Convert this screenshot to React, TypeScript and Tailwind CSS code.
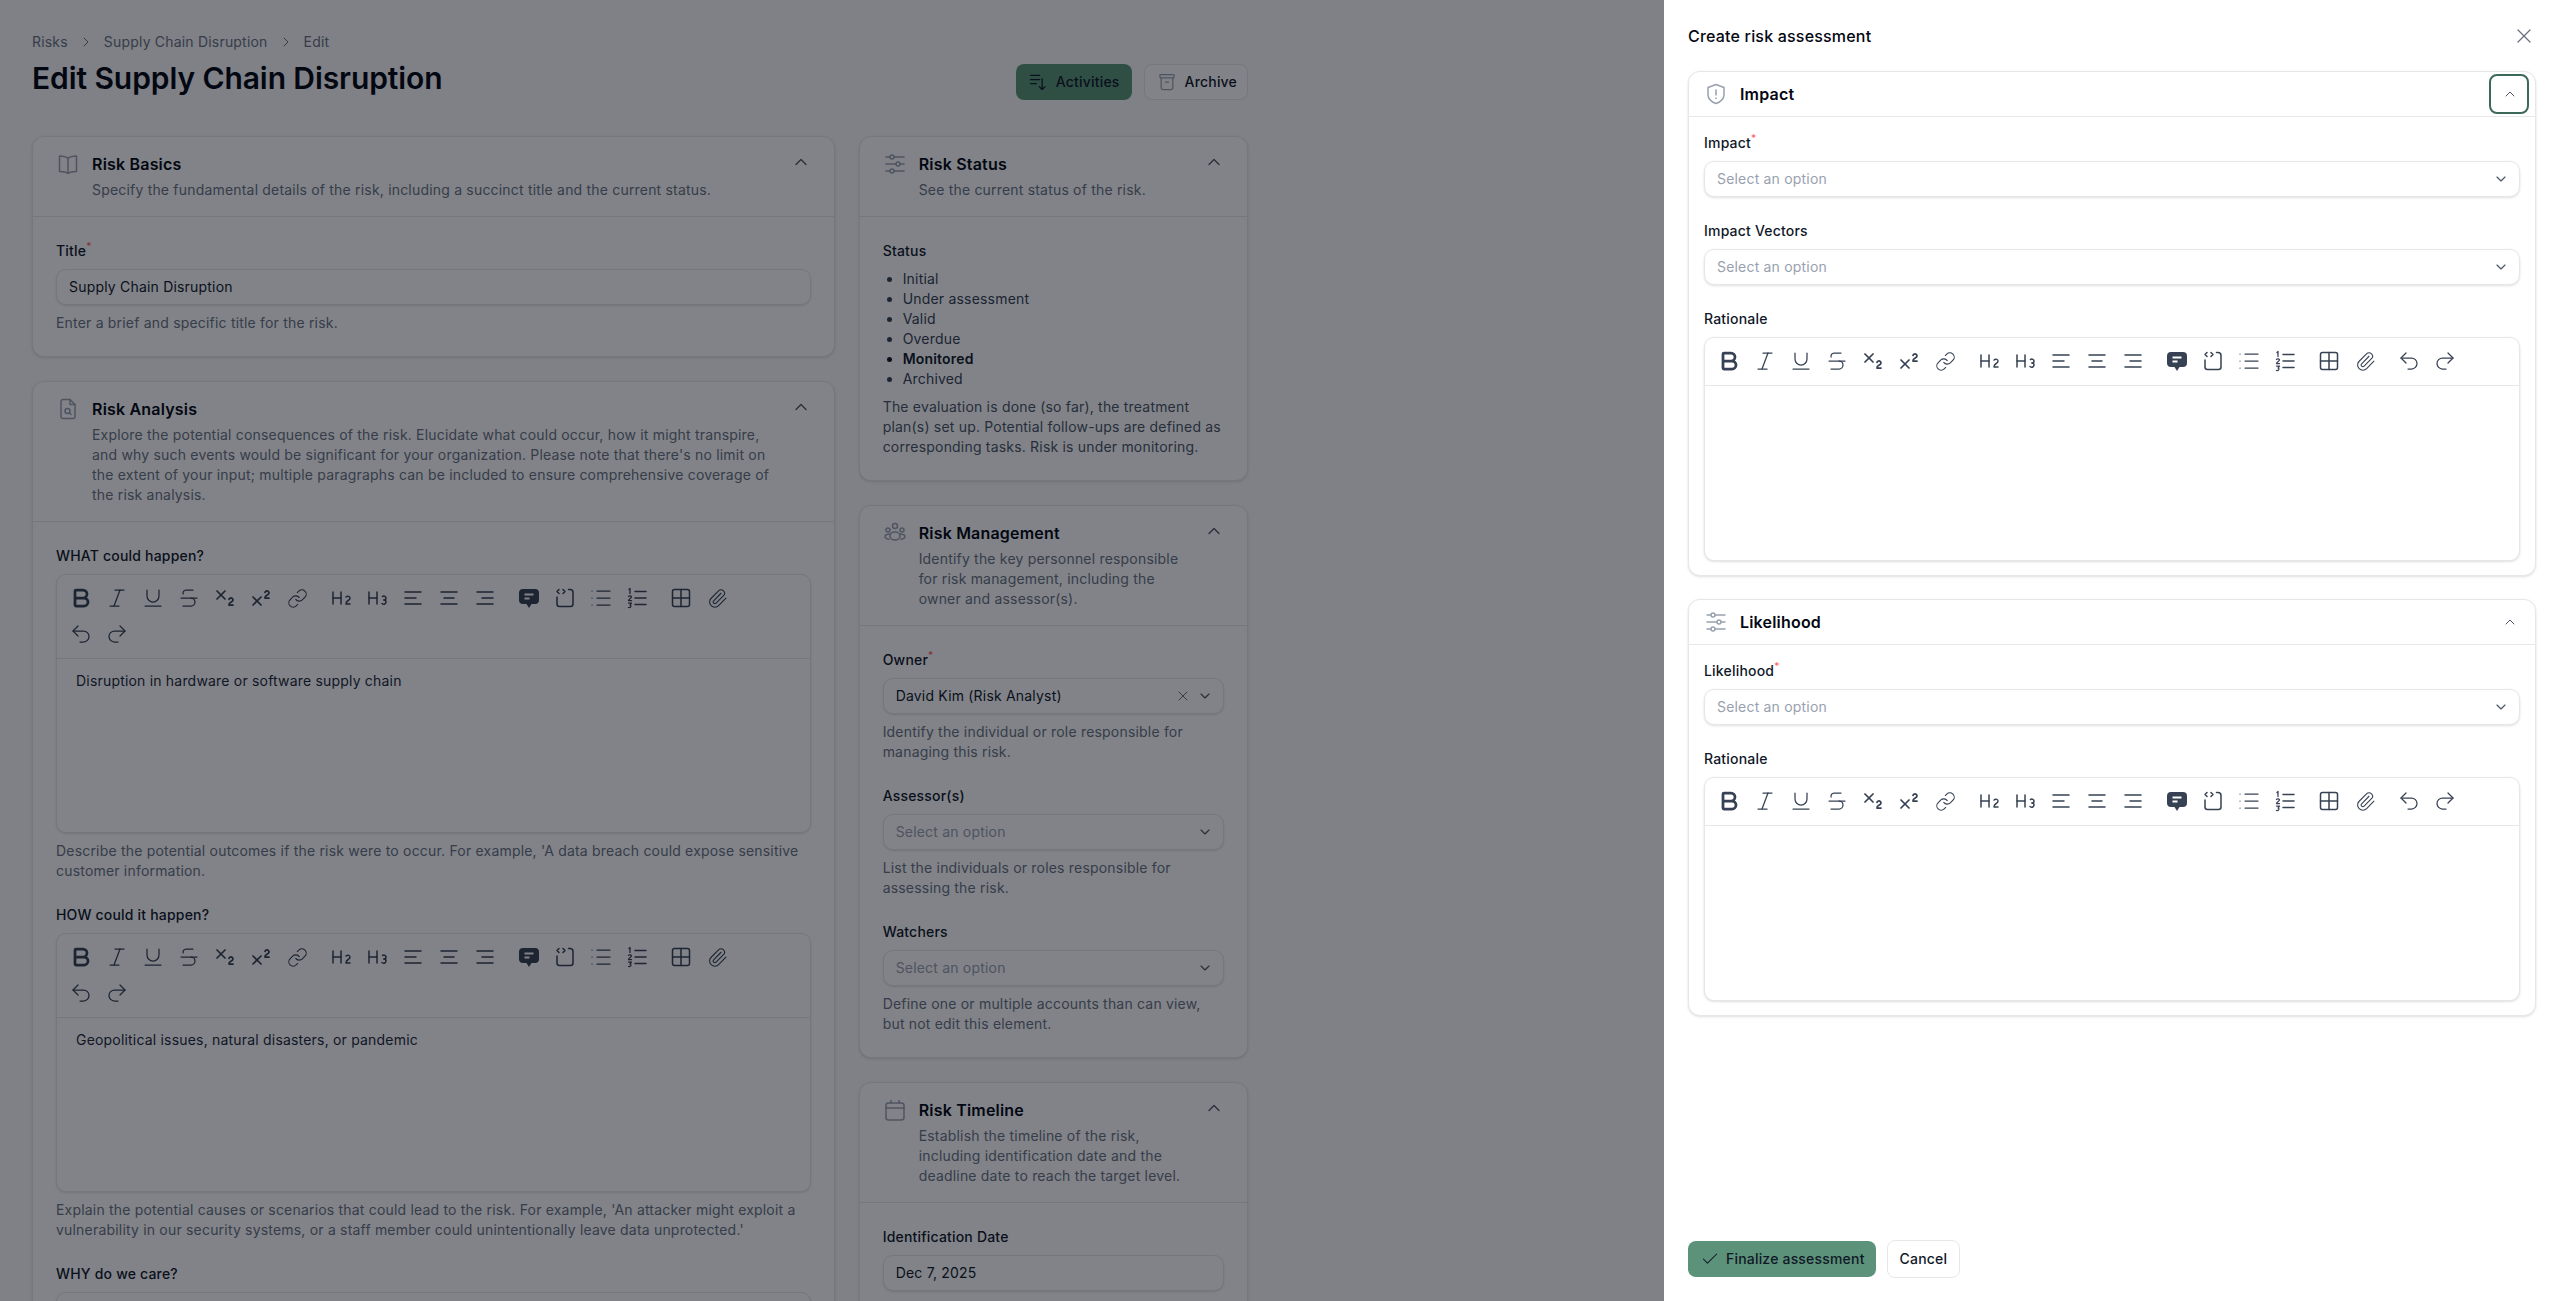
import type { ReactNode } from "react";
import {
  Bold,
  Check,
  ChevronDown,
  ChevronRight,
  ChevronUp,
  Heading2,
  Heading3,
  Italic,
  Link,
  List,
  Paperclip,
  Redo2,
  Strikethrough,
  Subscript,
  Superscript,
  Underline,
  Undo2,
  X,
} from "lucide-react";

function Glyph({ children, className = "w-6 h-6 text-gray-400" }: { children: ReactNode; className?: string }) {
  return (
    <svg viewBox="0 0 24 24" fill="none" stroke="currentColor" strokeWidth="1.5" strokeLinecap="round" strokeLinejoin="round" className={`shrink-0 ${className}`}>
      {children}
    </svg>
  );
}

const BookIcon = () => (
  <Glyph>
    <path d="M12 6.5C10.5 5 8 4 3.5 4v15.5c4.500 0 7 .8 8.500 2 1.500-1.200 4-2 8.500-2V4C16 4 13.500 5 12 6.500z" />
    <path d="M12 6.500V21" />
  </Glyph>
);

const FileIcon = () => (
  <Glyph>
    <path d="M14 2.500H7a2 2 0 0 0-2 2v15a2 2 0 0 0 2 2h10a2 2 0 0 0 2-2V7.500z" />
    <path d="M14 2.500v5h5" />
    <circle cx="11.500" cy="14" r="2.500" />
    <path d="M13.500 16l1.500 1.500" />
  </Glyph>
);

const SlidersIcon = () => (
  <Glyph>
    <path d="M3 5h4M11 5h10M3 12h10M17 12h4M3 19h4M11 19h10" />
    <circle cx="9" cy="5" r="2" />
    <circle cx="15" cy="12" r="2" />
    <circle cx="9" cy="19" r="2" />
  </Glyph>
);

const UsersIcon = () => (
  <Glyph>
    <circle cx="12" cy="5" r="2.500" />
    <circle cx="5" cy="9" r="2" />
    <circle cx="19" cy="9" r="2" />
    <ellipse cx="12" cy="15" rx="5" ry="4" />
    <path d="M6.500 13C4 13.300 2 14.200 2 15.500S3.800 18 6 18.300M17.500 13c2.500.3 4.500 1.200 4.500 2.500S20.200 18 18 18.300" />
  </Glyph>
);

const CalendarIcon = () => (
  <Glyph>
    <rect x="3" y="5" width="18" height="17" rx="2.500" />
    <path d="M3 10h18M8 2.500V5M16 2.500V5" />
  </Glyph>
);

const ShieldIcon = () => (
  <Glyph>
    <path d="M12 2.500l8 3v7c0 4.500-3.500 7.500-8 9-4.500-1.500-8-4.500-8-9v-7z" />
    <path d="M12 8v5M12 16v.5" />
  </Glyph>
);

const ActivitiesIcon = () => (
  <Glyph className="w-5 h-5 text-gray-900">
    <path d="M3 4h11M3 9h11M3 14h7M17 8v13M13.500 17.500L17 21l3.500-3.500" />
  </Glyph>
);

const ArchiveIcon = () => (
  <Glyph className="w-5 h-5 text-gray-400">
    <rect x="3.500" y="3" width="17" height="4" rx="1" />
    <path d="M5 7v12a2 2 0 0 0 2 2h10a2 2 0 0 0 2-2V7M10 12h4" />
  </Glyph>
);

const AlignLeft = () => (
  <Glyph className="w-6 h-6">
    <path d="M4 6h16M4 12h11M4 18h16" />
  </Glyph>
);

const AlignCenter = () => (
  <Glyph className="w-6 h-6">
    <path d="M4 6h16M7 12h10M4 18h16" />
  </Glyph>
);

const AlignRight = () => (
  <Glyph className="w-6 h-6">
    <path d="M4 6h16M9 12h11M4 18h16" />
  </Glyph>
);

const CommentIcon = () => (
  <svg viewBox="0 0 24 24" className="h-6 w-6 shrink-0">
    <path fill="currentColor" d="M6 3h12a4 4 0 0 1 4 4v7a4 4 0 0 1-4 4h-3.500L12 22l-2.500-4H6a4 4 0 0 1-4-4V7a4 4 0 0 1 4-4z" />
    <path fill="none" stroke="#fff" strokeWidth="2" d="M7.500 8.500h9M7.500 12.500h5" />
  </svg>
);

const CodeIcon = () => (
  <Glyph className="w-6 h-6">
    <path d="M15.500 3.500H17a3 3 0 0 1 3 3V18a2.500 2.500 0 0 1-2.500 2.500h-11A2.500 2.500 0 0 1 4 18v-7" />
    <path d="M6 3.500L4 5.500l2 2M10 3.500l2 2-2 2" />
  </Glyph>
);

const OrderedIcon = () => (
  <Glyph className="w-6 h-6">
    <path d="M10 5.500h11M10 12h11M10 18.500h11" />
    <path strokeWidth="1.25" d="M4 3.500l1-1v5M3.500 10.500c.5-1 3-1 3 .5 0 1-3 2-3 3.500h3M3.500 17h3L5 19c1.500 0 1.500 3-1.500 2.500" />
  </Glyph>
);

const TableIcon = () => (
  <Glyph className="w-6 h-6">
    <rect x="3.500" y="3.500" width="17" height="17" rx="2" />
    <path d="M12 3.500v17M3.500 12h17" />
  </Glyph>
);

const toolbarGroups: ReactNode[][] = [
  [
    <Bold className="h-6 w-6" strokeWidth={2.75} />,
    <Italic className="h-6 w-6" strokeWidth={1.25} />,
    <Underline className="h-6 w-6" strokeWidth={1.25} />,
    <Strikethrough className="h-6 w-6" strokeWidth={1.25} />,
    <Subscript className="h-6 w-6" strokeWidth={1.75} />,
    <Superscript className="h-6 w-6" strokeWidth={1.75} />,
    <Link className="h-[21px] w-[21px]" strokeWidth={1.25} />,
  ],
  [<Heading2 className="h-6 w-6" strokeWidth={1.5} />, <Heading3 className="h-6 w-6" strokeWidth={1.5} />, <AlignLeft />, <AlignCenter />, <AlignRight />],
  [<CommentIcon />, <CodeIcon />, <List className="h-6 w-6" strokeWidth={1.25} />, <OrderedIcon />],
  [<TableIcon />, <Paperclip className="h-[21px] w-[21px]" strokeWidth={1.25} />],
  [<Undo2 className="h-6 w-6" strokeWidth={1.25} />, <Redo2 className="h-6 w-6" strokeWidth={1.25} />],
];

function Editor({ value, wrapped }: { value?: string; wrapped?: boolean }) {
  return (
    <div className="rounded-[10px] border border-gray-200 bg-white shadow-sm">
      <div className="flex flex-wrap gap-x-4 gap-y-3 border-b border-gray-200 pb-3 pl-2.5 pr-2.5 pt-[11px]">
        {toolbarGroups.map((group, i) => (
          <div key={i} className="flex gap-2">
            {group.map((icon, j) => (
              <span key={j} className="flex h-6 w-7 items-center justify-center text-gray-700">
                {icon}
              </span>
            ))}
          </div>
        ))}
      </div>
      <div className={`px-[19px] py-3 text-sm text-gray-800 ${wrapped ? "h-[173px]" : "h-[174px]"}`}>{value}</div>
    </div>
  );
}

function Label({ children, required }: { children: ReactNode; required?: boolean }) {
  return (
    <div className="text-sm font-medium leading-5 text-gray-900">
      {children}
      {required && <span className="align-super text-[10px] leading-[0] text-red-400">*</span>}
    </div>
  );
}

function Help({ children }: { children: ReactNode }) {
  return <p className="mt-2 text-sm text-gray-500">{children}</p>;
}

function SelectBox({ value, clearable }: { value?: string; clearable?: boolean }) {
  return (
    <div className="mt-2 flex h-9 items-center rounded-[10px] border border-gray-200 bg-white pl-3 pr-2.5 text-sm shadow-sm">
      <span className={`flex-1 ${value ? "text-gray-900" : "text-gray-400"}`}>{value ?? "Select an option"}</span>
      {clearable && <X className="mr-1.5 h-4 w-4 text-gray-500" strokeWidth={1.5} />}
      <ChevronDown className="h-4 w-4 text-gray-600" strokeWidth={1.75} />
    </div>
  );
}

function TextBox({ value }: { value: string }) {
  return <div className="mt-2 flex h-9 items-center rounded-[10px] border border-gray-200 bg-white px-3 text-sm text-gray-900 shadow-sm">{value}</div>;
}

function Section({ icon, title, description, children }: { icon: ReactNode; title: string; description: string; children: ReactNode }) {
  return (
    <section className="rounded-xl border border-gray-200 bg-white shadow-sm">
      <header className="flex gap-3 border-b border-gray-200 px-[23px] pb-4 pt-[15px]">
        {icon}
        <div className="min-w-0 flex-1">
          <h2 className="text-base font-semibold leading-6 text-gray-950">{title}</h2>
          <p className="mt-1 text-sm text-gray-500">{description}</p>
        </div>
        <ChevronUp className="h-5 w-5 shrink-0 text-gray-600" strokeWidth={1.5} />
      </header>
      <div className="px-[23px] pb-[23px] pt-6">{children}</div>
    </section>
  );
}

function PanelCard({ icon, title, focused, children }: { icon: ReactNode; title: string; focused?: boolean; children: ReactNode }) {
  return (
    <section className="rounded-xl border border-gray-200 bg-white shadow-sm">
      <header className="relative flex h-[45px] items-center gap-3 border-b border-gray-200 pl-[15px] pr-[17px]">
        {icon}
        <h3 className="flex-1 text-base font-semibold text-gray-950">{title}</h3>
        <ChevronUp className="h-4 w-4 text-gray-600" strokeWidth={1.5} />
        {focused && <span className="absolute right-[6px] top-[2px] h-10 w-10 rounded-lg border-2 border-[#3d6a58]" />}
      </header>
      <div className="space-y-6 px-[15px] pb-[14px] pt-4">{children}</div>
    </section>
  );
}

export default function App() {
  return (
    <div className="relative h-screen overflow-hidden bg-[#fafafa] font-['Inter',sans-serif] tracking-[0.012em]">
      <main className="w-[1280px] px-8 pt-8">
        <div className="mb-9 flex items-end justify-between">
          <div className="pb-1">
            <nav className="flex items-center gap-2.5 text-sm text-gray-500">
              <span>Risks</span>
              <ChevronRight className="h-4 w-4" strokeWidth={1.5} />
              <span>Supply Chain Disruption</span>
              <ChevronRight className="h-4 w-4" strokeWidth={1.5} />
              <span>Edit</span>
            </nav>
            <h1 className="mt-2 text-3xl font-semibold tracking-[-0.003em] text-gray-950">Edit Supply Chain Disruption</h1>
          </div>
          <div className="flex items-center gap-3">
            <button className="flex h-9 items-center gap-2 rounded-lg bg-[#5b9778] px-3 text-sm font-medium text-gray-900">
              <ActivitiesIcon />
              Activities
            </button>
            <button className="flex h-9 items-center gap-2 rounded-lg border border-gray-200 bg-white pl-3 pr-2.5 text-sm font-medium text-gray-900">
              <ArchiveIcon />
              Archive
            </button>
          </div>
        </div>

        <div className="grid grid-cols-3 items-start gap-6">
          <div className="col-span-2 space-y-6">
            <Section icon={<BookIcon />} title="Risk Basics" description="Specify the fundamental details of the risk, including a succinct title and the current status.">
              <Label required>Title</Label>
              <TextBox value="Supply Chain Disruption" />
              <Help>Enter a brief and specific title for the risk.</Help>
            </Section>
            <Section
              icon={<FileIcon />}
              title="Risk Analysis"
              description="Explore the potential consequences of the risk. Elucidate what could occur, how it might transpire, and why such events would be significant for your organization. Please note that there's no limit on the extent of your input; multiple paragraphs can be included to ensure comprehensive coverage of the risk analysis."
            >
              <div className="space-y-6">
                <div>
                  <Label>WHAT could happen?</Label>
                  <div className="mt-2">
                    <Editor wrapped value="Disruption in hardware or software supply chain" />
                  </div>
                  <Help>Describe the potential outcomes if the risk were to occur. For example, 'A data breach could expose sensitive customer information.</Help>
                </div>
                <div>
                  <Label>HOW could it happen?</Label>
                  <div className="mt-2">
                    <Editor wrapped value="Geopolitical issues, natural disasters, or pandemic" />
                  </div>
                  <Help>Explain the potential causes or scenarios that could lead to the risk. For example, 'An attacker might exploit a vulnerability in our security systems, or a staff member could unintentionally leave data unprotected.'</Help>
                </div>
                <div>
                  <Label>WHY do we care?</Label>
                  <div className="mt-2">
                    <Editor wrapped />
                  </div>
                </div>
              </div>
            </Section>
          </div>

          <div className="space-y-6">
            <Section icon={<SlidersIcon />} title="Risk Status" description="See the current status of the risk.">
              <Label>Status</Label>
              <ul className="mt-2 list-disc pl-5 text-sm text-gray-700">
                <li>Initial</li>
                <li>Under assessment</li>
                <li>Valid</li>
                <li>Overdue</li>
                <li className="font-semibold text-gray-900">Monitored</li>
                <li>Archived</li>
              </ul>
              <p className="mt-2 text-sm text-gray-600">The evaluation is done (so far), the treatment plan(s) set up. Potential follow-ups are defined as corresponding tasks. Risk is under monitoring.</p>
            </Section>
            <Section icon={<UsersIcon />} title="Risk Management" description="Identify the key personnel responsible for risk management, including the owner and assessor(s).">
              <div className="space-y-6">
                <div>
                  <Label required>Owner</Label>
                  <SelectBox value="David Kim (Risk Analyst)" clearable />
                  <Help>Identify the individual or role responsible for managing this risk.</Help>
                </div>
                <div>
                  <Label>Assessor(s)</Label>
                  <SelectBox />
                  <Help>List the individuals or roles responsible for assessing the risk.</Help>
                </div>
                <div>
                  <Label>Watchers</Label>
                  <SelectBox />
                  <Help>Define one or multiple accounts than can view, but not edit this element.</Help>
                </div>
              </div>
            </Section>
            <Section icon={<CalendarIcon />} title="Risk Timeline" description="Establish the timeline of the risk, including identification date and the deadline date to reach the target level.">
              <Label>Identification Date</Label>
              <TextBox value="Dec 7, 2025" />
            </Section>
          </div>
        </div>
      </main>

      {/* dimmed backdrop + slide-over */}
      <div className="fixed inset-0 bg-gray-950/50" />
      <aside className="fixed inset-y-0 right-0 flex w-[896px] flex-col bg-white px-6">
        <div className="flex h-[71px] items-center justify-between">
          <h2 className="text-base font-medium text-gray-950">Create risk assessment</h2>
          <X className="h-6 w-6 text-gray-500" strokeWidth={1.25} />
        </div>
        <div className="flex-1 space-y-[23px]">
          <PanelCard icon={<ShieldIcon />} title="Impact" focused>
            <div>
              <Label required>Impact</Label>
              <SelectBox />
            </div>
            <div>
              <Label>Impact Vectors</Label>
              <SelectBox />
            </div>
            <div>
              <Label>Rationale</Label>
              <div className="mt-2">
                <Editor />
              </div>
            </div>
          </PanelCard>
          <PanelCard icon={<SlidersIcon />} title="Likelihood">
            <div>
              <Label required>Likelihood</Label>
              <SelectBox />
            </div>
            <div>
              <Label>Rationale</Label>
              <div className="mt-2">
                <Editor />
              </div>
            </div>
          </PanelCard>
        </div>
        <div className="flex items-center gap-[11px] pb-[23px]">
          <button className="flex h-9 items-center gap-1.5 rounded-lg bg-[#5c9279] pl-3 pr-[11px] text-sm font-medium text-gray-900">
            <Check className="h-5 w-5" strokeWidth={1.25} />
            Finalize assessment
          </button>
          <button className="flex h-[38px] items-center rounded-lg border border-gray-200 bg-white px-3 text-sm font-medium text-gray-900">Cancel</button>
        </div>
      </aside>
    </div>
  );
}
